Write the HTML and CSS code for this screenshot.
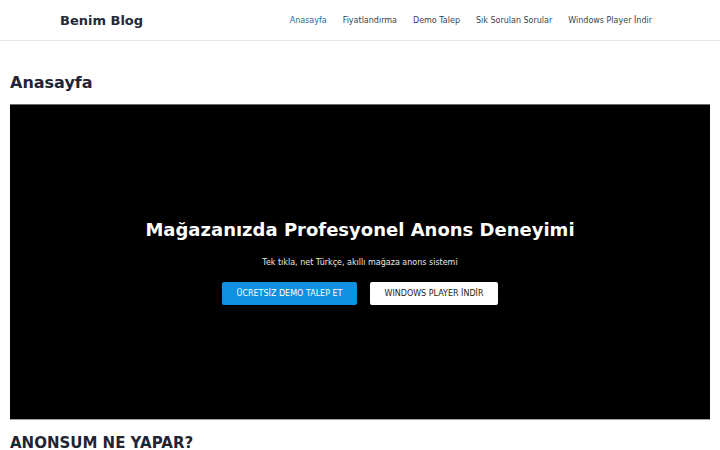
FILE: index.html
```html
<!DOCTYPE html>
<html lang="tr">
<head>
<meta charset="utf-8">
<title>Benim Blog</title>
<link rel="stylesheet" href="styles.css">
</head>
<body>
<header class="site-header">
  <div class="header-inner">
    <a class="logo" href="#">Benim Blog</a>
    <nav class="nav">
      <a class="nav-link active" href="#">Anasayfa</a>
      <a class="nav-link" href="#">Fiyatlandırma</a>
      <a class="nav-link" href="#">Demo Talep</a>
      <a class="nav-link" href="#">Sık Sorulan Sorular</a>
      <a class="nav-link" href="#">Windows Player İndir</a>
    </nav>
  </div>
</header>
<main class="content">
  <h1 class="page-title">Anasayfa</h1>
  <section class="hero">
    <h2 class="hero-title">Mağazanızda Profesyonel Anons Deneyimi</h2>
    <p class="hero-sub">Tek tıkla, net Türkçe, akıllı mağaza anons sistemi</p>
    <div class="hero-actions">
      <a class="btn btn-primary" href="#">ÜCRETSİZ DEMO TALEP ET</a>
      <a class="btn btn-light" href="#">WINDOWS PLAYER İNDİR</a>
    </div>
  </section>
  <h2 class="section-title">ANONSUM NE YAPAR?</h2>
</main>
</body>
</html>
```
FILE: styles.css
```css
* { box-sizing: border-box; }
html, body { margin: 0; padding: 0; }
body {
  font-family: "DejaVu Sans", sans-serif;
  color: #1f2533;
  background: #fff;
}
a { text-decoration: none; }
.site-header {
  height: 41px;
  border-bottom: 1px solid #e6e6e6;
}
.header-inner {
  width: 600px;
  margin: 0 auto;
  height: 40px;
  display: flex;
  align-items: center;
  justify-content: space-between;
}
.logo {
  font-size: 13px;
  font-weight: bold;
  color: #232a36;
}
.nav {
  display: flex;
  gap: 16px;
  padding-right: 8px;
}
.nav-link {
  font-size: 8px;
  color: #3a3f48;
}
.nav-link.active { color: #2a6aa6; }
.content {
  padding: 0 10px;
}
.page-title {
  margin: 0;
  padding-top: 32px;
  height: 63px;
  font-size: 16px;
  line-height: 20px;
  font-weight: bold;
  color: #1f2533;
}
.hero {
  height: 316px;
  background: #000;
  border-bottom: 1px solid #a0a0a0;
  border-top: 1px solid #6a6a6a;
  display: flex;
  flex-direction: column;
  align-items: center;
  justify-content: center;
  color: #fff;
  padding-top: 0;
}
.hero-title {
  margin: 0;
  font-size: 18px;
  line-height: 22px;
  font-weight: bold;
}
.hero-sub {
  margin: 16px 0 0;
  font-size: 8px;
  line-height: 12px;
  color: #e8e8e8;
}
.hero-actions {
  display: flex;
  gap: 13px;
  margin-top: 13px;
}
.btn {
  display: flex;
  align-items: center;
  justify-content: center;
  height: 23px;
  border-radius: 2px;
  font-size: 8px;
}
.btn-primary {
  width: 135px;
  background: #1090e0;
  color: #fff;
}
.btn-light {
  width: 128px;
  background: #fff;
  color: #222;
}
.section-title {
  margin: 0;
  padding-top: 13px;
  font-size: 15px;
  line-height: 20px;
  font-weight: bold;
  color: #1f2533;
}
```
